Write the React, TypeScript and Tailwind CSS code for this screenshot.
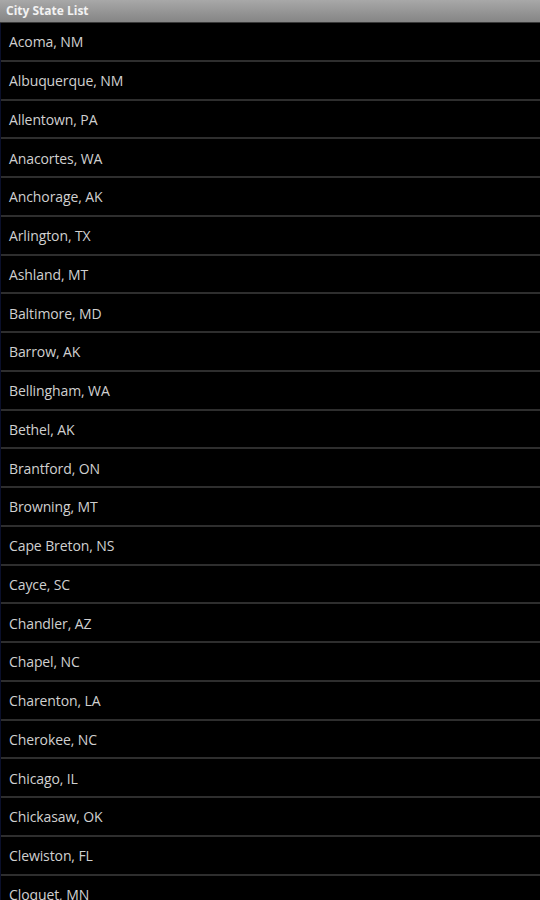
const cities = [
  "Acoma, NM",
  "Albuquerque, NM",
  "Allentown, PA",
  "Anacortes, WA",
  "Anchorage, AK",
  "Arlington, TX",
  "Ashland, MT",
  "Baltimore, MD",
  "Barrow, AK",
  "Bellingham, WA",
  "Bethel, AK",
  "Brantford, ON",
  "Browning, MT",
  "Cape Breton, NS",
  "Cayce, SC",
  "Chandler, AZ",
  "Chapel, NC",
  "Charenton, LA",
  "Cherokee, NC",
  "Chicago, IL",
  "Chickasaw, OK",
  "Clewiston, FL",
  "Cloquet, MN",
];

export default function App() {
  return (
    <div className="w-[540px] h-[900px] overflow-hidden bg-black font-['Open_Sans',sans-serif] flex flex-col">
      <div className="h-[23px] shrink-0 flex items-center px-[6px] bg-gradient-to-b from-[#a8a8a8] to-[#858585] border-b border-[#3a3a3a]">
        <span className="text-[12px] font-bold text-[#f2f2f2] leading-none">City State List</span>
      </div>
      <ul className="flex flex-col border-l border-[#0a0f2a]">
        {cities.map((c) => (
          <li
            key={c}
            className="h-[38.76px] shrink-0 flex items-center pl-[8px] pt-[2px] border-b-2 border-[#2e2e2e]"
          >
            <span className="text-[14px] text-[#d0d0d0] leading-none tracking-[-0.1px]">{c}</span>
          </li>
        ))}
      </ul>
    </div>
  );
}
